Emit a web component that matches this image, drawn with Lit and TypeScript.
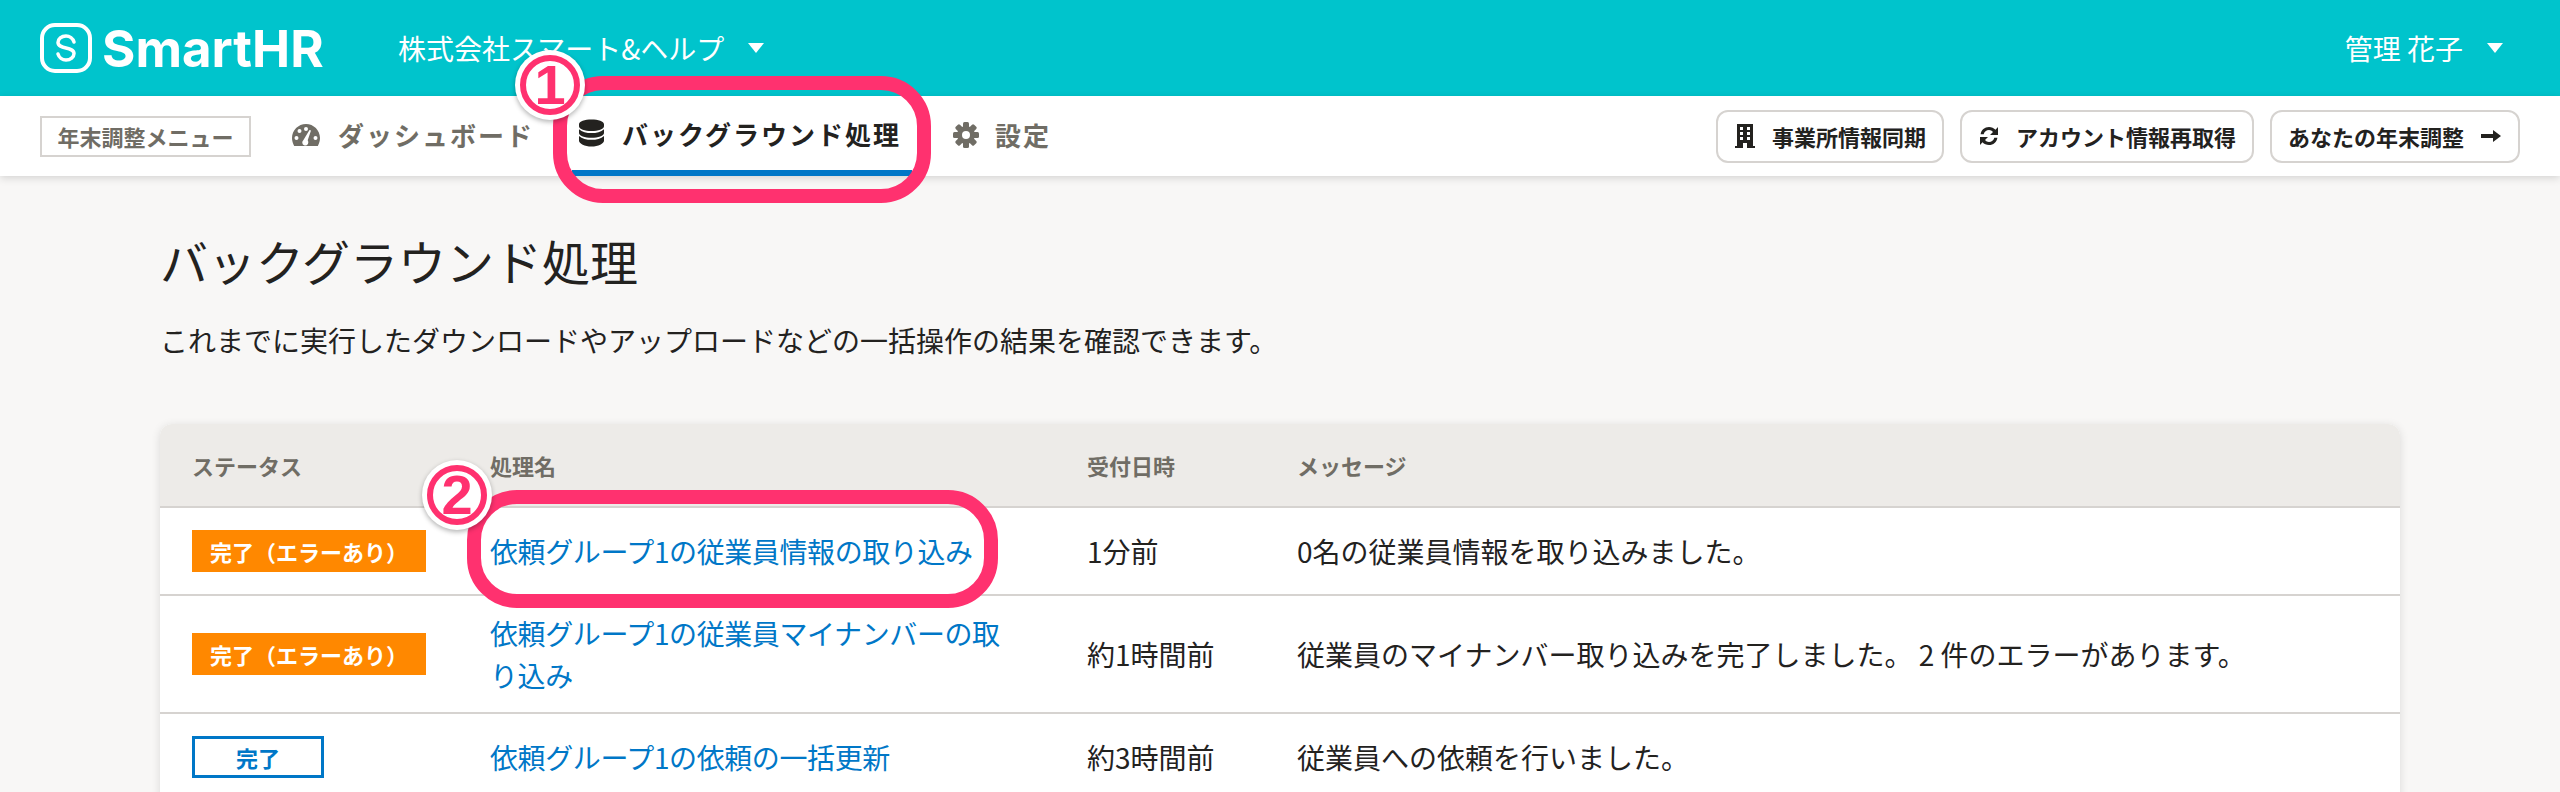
import {LitElement, css, html, svg} from 'lit';
import {customElement} from 'lit/decorators.js';

const rows = [
  {status: 'error', name: '依頼グループ1の従業員情報の取り込み', date: '1分前', message: '0名の従業員情報を取り込みました。'},
  {status: 'error', name: '依頼グループ1の従業員マイナンバーの取り込み', date: '約1時間前', message: '従業員のマイナンバー取り込みを完了しました。 2 件のエラーがあります。'},
  {status: 'done', name: '依頼グループ1の依頼の一括更新', date: '約3時間前', message: '従業員への依頼を行いました。'},
];

const gearTeeth = [0, 45, 90, 135];

@customElement('app-root')
export class AppRoot extends LitElement {
  static styles = css`
    :host {
      display: block;
      position: relative;
      height: 792px;
      overflow: hidden;
      background: #f8f7f6;
      color: #23221f;
      font-family: "Noto Sans CJK JP", "Noto Sans", sans-serif;
    }
    .topbar {
      display: flex;
      align-items: center;
      height: 96px;
      padding: 0 57px 0 40px;
      box-sizing: border-box;
      background: #00c4cc;
      color: #fff;
      font-size: 28px;
    }
    .logo {
      display: flex;
      align-items: center;
      gap: 10px;
      width: 358px;
      font-family: Inter, sans-serif;
      font-size: 51px;
      font-weight: 700;
    }
    .caret {
      width: 0;
      height: 0;
      margin-left: 24px;
      border-left: 8px solid transparent;
      border-right: 8px solid transparent;
      border-top: 10px solid #fff;
    }
    .user {
      display: flex;
      align-items: center;
      margin-left: auto;
    }
    .navbar {
      display: flex;
      align-items: center;
      height: 80px;
      padding: 0 40px;
      box-sizing: border-box;
      background: #fff;
      box-shadow: 0 2px 8px rgba(0, 0, 0, 0.15);
      position: relative;
    }
    .menu-label {
      display: flex;
      align-items: center;
      justify-content: center;
      width: 211px;
      height: 41px;
      box-sizing: border-box;
      border: 2px solid #d6d3d0;
      color: #706d65;
      font-size: 22px;
      font-weight: 700;
    }
    .tab {
      display: flex;
      align-items: center;
      gap: 18px;
      height: 80px;
      padding-bottom: 3px;
      box-sizing: border-box;
      font-size: 26px;
      font-weight: 700;
      color: #706d65;
      letter-spacing: 2px;
    }
    .tab.dash {
      margin-left: 41px;
    }
    .tab.active {
      margin-left: 38px;
      padding: 0 11px 0 7px;
      gap: 18px;
      color: #23221f;
      border-bottom: 6px solid #0077c7;
    }
    .tab.settings {
      margin-left: 41px;
      gap: 16px;
    }
    .tab svg {
      fill: currentColor;
    }
    .actions {
      display: flex;
      gap: 16px;
      margin-left: auto;
    }
    .btn {
      display: flex;
      align-items: center;
      gap: 16px;
      height: 53px;
      box-sizing: border-box;
      padding: 0 16px;
      background: #fff;
      border: 2px solid #d6d3d0;
      border-radius: 12px;
      font-size: 22px;
      font-weight: 700;
    }
    .btn svg {
      fill: #23221f;
      flex: none;
    }
    .content {
      padding: 0 160px;
    }
    h1 {
      margin: 0;
      padding-top: 48px;
      font-size: 48px;
      font-weight: 400;
      line-height: 72px;
    }
    .lead {
      margin: 23px 0 0;
      font-size: 28px;
      line-height: 42px;
    }
    .panel {
      margin-top: 63px;
      background: #fff;
      border-radius: 12px 12px 0 0;
      box-shadow: 0 2px 10px rgba(0, 0, 0, 0.12);
      overflow: hidden;
    }
    table {
      width: 100%;
      border-collapse: collapse;
      table-layout: fixed;
    }
    th {
      height: 82px;
      padding: 0 32px;
      background: #edebe8;
      border-bottom: 2px solid #d6d3d0;
      color: #706d65;
      font-size: 22px;
      font-weight: 700;
      text-align: left;
    }
    td {
      height: 86px;
      padding: 0 32px;
      border-bottom: 2px solid #d6d3d0;
      font-size: 28px;
      line-height: 42px;
    }
    tr.tall td {
      height: 116px;
    }
    a {
      color: #0077c7;
      text-decoration: none;
      letter-spacing: -0.4px;
    }
    .badge {
      display: flex;
      align-items: center;
      justify-content: center;
      height: 42px;
      box-sizing: border-box;
      font-size: 22px;
      font-weight: 700;
    }
    .badge.error {
      width: 234px;
      background: #ff8800;
      color: #fff;
    }
    .badge.done {
      width: 132px;
      border: 3px solid #0077c7;
      color: #0077c7;
      background: #fff;
    }
    .callout {
      position: absolute;
      box-sizing: border-box;
      border: 14px solid #ff316f;
      border-radius: 50px;
    }
    .callout.one {
      left: 553px;
      top: 76px;
      width: 378px;
      height: 127px;
    }
    .callout.two {
      left: 467px;
      top: 490px;
      width: 531px;
      height: 118px;
    }
    .num {
      position: absolute;
      display: flex;
      align-items: center;
      justify-content: center;
      width: 70px;
      height: 70px;
      box-sizing: border-box;
      border-radius: 50%;
      background: #fff;
      box-shadow: 0 2px 5px rgba(0, 0, 0, 0.3);
    }
    .num span {
      display: flex;
      align-items: center;
      justify-content: center;
      width: 60px;
      height: 60px;
      box-sizing: border-box;
      border: 6px solid #ff316f;
      border-radius: 50%;
      color: #ff316f;
      font-family: "Liberation Sans", sans-serif;
      font-size: 56px;
      font-weight: 700;
      line-height: 1;
    }
    .num.one {
      left: 515px;
      top: 50px;
    }
    .num.two {
      left: 422px;
      top: 460px;
    }
  `;

  render() {
    return html`
      <div class="topbar">
        <div class="logo">
          <svg width="52" height="50" viewBox="0 0 52 50" fill="none" stroke="#fff">
            <rect x="2" y="2" width="48" height="46" rx="13" stroke-width="4"></rect>
            <path d="M34 19c-1-3.500-4.500-6-8-6-4.500 0-8 3-8 6.500 0 7 16 4 16 11 0 3.500-3.500 6.500-8 6.500-3.500 0-7-2.500-8-6" stroke-width="3.500" stroke-linecap="round"></path>
          </svg>
          <span>SmartHR</span>
        </div>
        <span>株式会社スマート&ヘルプ</span>
        <i class="caret"></i>
        <div class="user"><span>管理 花子</span><i class="caret"></i></div>
      </div>
      <div class="navbar">
        <div class="menu-label">年末調整メニュー</div>
        <div class="tab dash">
          <svg width="28" height="24" viewBox="0 0 28 24"><path fill-rule="evenodd" d="M14 1C6.300 1 0 7.300 0 15c0 2.800.8 5.500 2.200 8h23.600C27.200 20.500 28 17.800 28 15 28 7.300 21.700 1 14 1zM4.500 17a2 2 0 1 1 0-4 2 2 0 0 1 0 4zm3-7a2 2 0 1 1 0-4 2 2 0 0 1 0 4zM14 8a2 2 0 1 1 0-4 2 2 0 0 1 0 4zm2.300 11.500a3 3 0 1 1-5-2.200L17.500 7l1.500.6-3.300 9.700c.4.600.6 1.300.6 2.200zM23.500 17a2 2 0 1 1 0-4 2 2 0 0 1 0 4z"></path></svg>
          <span>ダッシュボード</span>
        </div>
        <div class="tab active">
          <svg width="25" height="28" viewBox="0 0 26 28"><path d="M13 0c7 0 13 2 13 5v2c0 3-6 5-13 5S0 10 0 7V5c0-3 6-5 13-5zM0 10c3 3 8 4 13 4s10-1 13-4v4c0 3-6 5-13 5S0 17 0 14zM0 17c3 3 8 4 13 4s10-1 13-4v5c0 3-6 6-13 6S0 25 0 22z"></path></svg>
          <span>バックグラウンド処理</span>
        </div>
        <div class="tab settings">
          <svg width="26" height="26" viewBox="0 0 26 26">
            ${gearTeeth.map(
              (deg) => svg`<rect x="10" y="0" width="6" height="26" rx="1.500" transform="rotate(${deg} 13 13)"></rect>`,
            )}
            <circle cx="13" cy="13" r="9"></circle>
            <circle cx="13" cy="13" r="4" fill="#fff"></circle>
          </svg>
          <span>設定</span>
        </div>
        <div class="actions">
          <div class="btn">
            <svg width="22" height="24" viewBox="0 0 22 24"><path fill-rule="evenodd" d="M3 0h16v22h2v2H1v-2h2zM6 3v3h3V3zm7 0v3h3V3zM6 8v3h3V8zm7 0v3h3V8zM6 13v3h3v-3zm7 0v3h3v-3zM9 19v5h4v-5z"></path></svg>
            <span>事業所情報同期</span>
          </div>
          <div class="btn">
            <svg width="22" height="24" viewBox="0 0 22 24"><path d="M11 3c2.600 0 4.900 1.100 6.500 2.800L20 3v8h-8l3-3c-1-1.200-2.400-2-4-2-2.600 0-4.800 1.800-5.300 4.300H2.600C3.200 5.900 6.700 3 11 3zM2 13h8l-3 3c1 1.200 2.400 2 4 2 2.600 0 4.800-1.800 5.300-4.300h3.100C18.800 18.100 15.300 21 11 21c-2.600 0-4.900-1.100-6.500-2.800L2 21z"></path></svg>
            <span>アカウント情報再取得</span>
          </div>
          <div class="btn">
            <span>あなたの年末調整</span>
            <svg width="22" height="16" viewBox="0 0 22 16"><path d="M13 2l8 6-8 6v-4H1V6h12z"></path></svg>
          </div>
        </div>
      </div>
      <div class="content">
        <h1>バックグラウンド処理</h1>
        <p class="lead">これまでに実行したダウンロードやアップロードなどの一括操作の結果を確認できます。</p>
        <div class="panel">
          <table>
            <colgroup>
              <col style="width: 298px" />
              <col style="width: 597px" />
              <col style="width: 210px" />
              <col />
            </colgroup>
            <thead>
              <tr><th>ステータス</th><th>処理名</th><th>受付日時</th><th>メッセージ</th></tr>
            </thead>
            <tbody>
              ${rows.map(
                (row, i) => html`
                  <tr class=${i === 1 ? 'tall' : ''}>
                    <td>
                      ${row.status === 'error'
                        ? html`<div class="badge error">完了（エラーあり）</div>`
                        : html`<div class="badge done">完了</div>`}
                    </td>
                    <td><a href="#">${row.name}</a></td>
                    <td>${row.date}</td>
                    <td>${row.message}</td>
                  </tr>
                `,
              )}
            </tbody>
          </table>
        </div>
      </div>
      <div class="callout one"></div>
      <div class="callout two"></div>
      <div class="num one"><span>1</span></div>
      <div class="num two"><span>2</span></div>
    `;
  }
}
